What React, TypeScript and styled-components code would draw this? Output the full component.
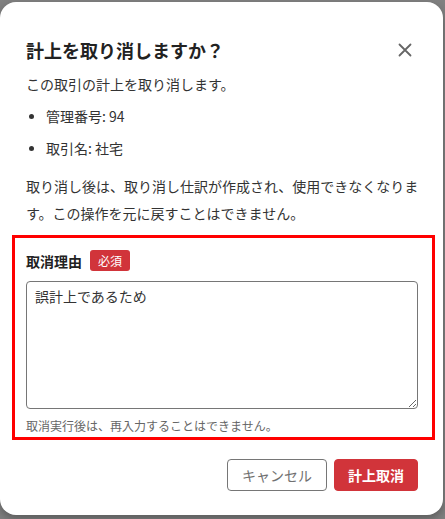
import React from 'react';
import styled, { createGlobalStyle } from 'styled-components';

const Global = createGlobalStyle`
  html, body { margin: 0; padding: 0; background: #818181; }
  body { font-family: "Noto Sans CJK JP", "Noto Sans", sans-serif; }
  * { box-sizing: border-box; }
`;

const Backdrop = styled.div`
  width: 445px;
  height: 519px;
  overflow: hidden;
  background: #818181;
  padding-top: 2px;
`;

const Modal = styled.div`
  width: 443px;
  height: 513px;
  background: #fff;
  border-radius: 16px;
  padding: 34px 25px 23px 26px;
  box-shadow: 0 4px 10px rgba(0, 0, 0, 0.3);
  display: flex;
  flex-direction: column;
  color: #333;
  font-size: 14px;
`;

const Header = styled.div`
  display: flex;
  align-items: center;
  justify-content: space-between;
  height: 28px;
`;

const Title = styled.h2`
  margin: 0;
  font-size: 18px;
  font-weight: 700;
  line-height: 28px;
  color: #222;
`;

const CloseButton = styled.button`
  width: 26px;
  height: 26px;
  border: none;
  background: none;
  padding: 0;
  display: flex;
  align-items: center;
  justify-content: center;
  color: #666;
`;

const Text = styled.p<{ $mt: number; $lh: number }>`
  margin: ${(p) => p.$mt}px -6px 0 0;
  line-height: ${(p) => p.$lh}px;
  font-size: 14px;
  color: #333;
`;

const List = styled.ul`
  list-style: none;
  margin: 11px 0 0;
  padding: 0 0 0 3px;
  display: flex;
  flex-direction: column;
  gap: 11px;
`;

const Item = styled.li`
  display: flex;
  align-items: center;
  gap: 12px;
  line-height: 21px;
`;

const Dot = styled.span`
  width: 5px;
  height: 5px;
  border-radius: 50%;
  background: #333;
`;

const Highlight = styled.div`
  margin: 8px -17px 0 -14px;
  border: 3px solid #ff0000;
  padding: 12px 14px 2px 11px;
`;

const LabelRow = styled.div`
  display: flex;
  align-items: center;
  gap: 8px;
  height: 21px;
`;

const Label = styled.span`
  font-weight: 700;
  font-size: 14px;
  color: #222;
`;

const Badge = styled.span`
  height: 21px;
  padding: 0 8px;
  border-radius: 3px;
  background: #d1343a;
  color: #fff;
  font-size: 12px;
  line-height: 21px;
`;

const TextArea = styled.textarea`
  display: block;
  margin-top: 10px;
  width: 392px;
  height: 128px;
  border: 1px solid #767676;
  border-radius: 4px;
  padding: 4px 8px;
  font-family: inherit;
  font-size: 14px;
  line-height: 21px;
  color: #333;
  resize: vertical;
  outline: none;
`;

const Help = styled.div`
  margin-top: 8px;
  font-size: 12px;
  line-height: 18px;
  color: #666;
`;

const Footer = styled.div`
  margin-top: 19px;
  display: flex;
  justify-content: flex-end;
  gap: 7px;
`;

const Button = styled.button<{ $primary?: boolean }>`
  height: 32px;
  padding: 0 ${(p) => (p.$primary ? 13 : 14)}px;
  border-radius: 4px;
  font-family: inherit;
  font-size: 14px;
  line-height: 30px;
  border: 1px solid ${(p) => (p.$primary ? '#d1343a' : '#767676')};
  background: ${(p) => (p.$primary ? '#d1343a' : '#fff')};
  color: ${(p) => (p.$primary ? '#fff' : '#707070')};
  font-weight: ${(p) => (p.$primary ? 700 : 400)};
`;

export default function App() {
  return (
    <>
      <Global />
      <Backdrop>
        <Modal>
          <Header>
            <Title>計上を取り消しますか？</Title>
            <CloseButton aria-label="閉じる">
              <svg width="14" height="14" viewBox="0 0 14 14">
                <path d="M1.5 1.5 L12.5 12.5 M12.5 1.5 L1.5 12.5" stroke="currentColor" strokeWidth="1.8" strokeLinecap="round" />
              </svg>
            </CloseButton>
          </Header>
          <Text $mt={10} $lh={21}>この取引の計上を取り消します。</Text>
          <List>
            <Item><Dot />管理番号: 94</Item>
            <Item><Dot />取引名: 社宅</Item>
          </List>
          <Text $mt={14} $lh={27}>
            取り消し後は、取り消し仕訳が作成され、使用できなくなります。この操作を元に戻すことはできません。
          </Text>
          <Highlight>
            <LabelRow>
              <Label>取消理由</Label>
              <Badge>必須</Badge>
            </LabelRow>
            <TextArea defaultValue="誤計上であるため" />
            <Help>取消実行後は、再入力することはできません。</Help>
          </Highlight>
          <Footer>
            <Button>キャンセル</Button>
            <Button $primary>計上取消</Button>
          </Footer>
        </Modal>
      </Backdrop>
    </>
  );
}
